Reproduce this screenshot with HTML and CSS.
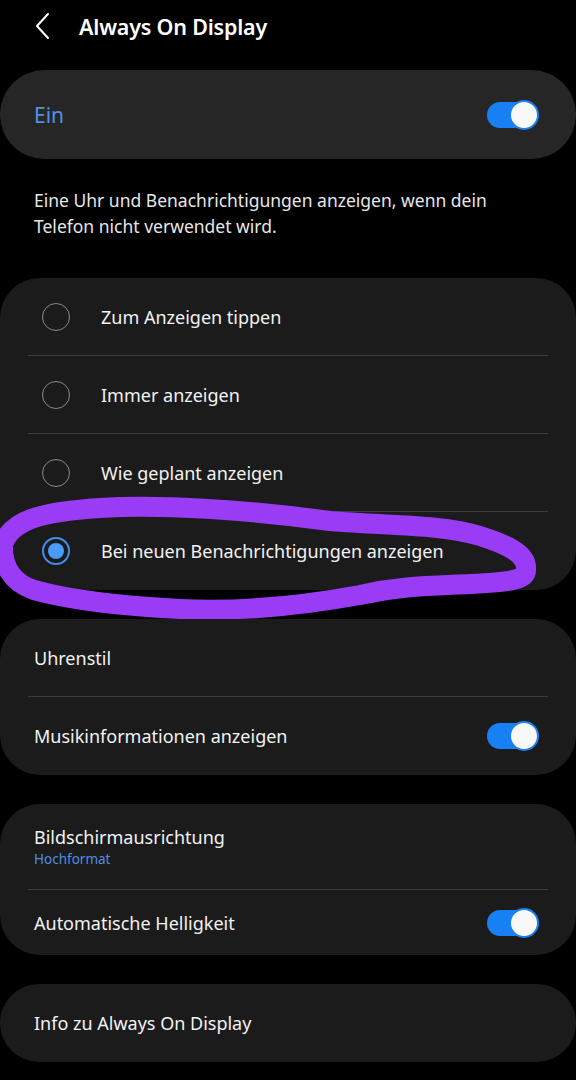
FILE: index.html
```html
<!DOCTYPE html>
<html lang="de">
<head>
<meta charset="utf-8">
<title>Always On Display</title>
<link rel="stylesheet" href="styles.css">
</head>
<body>
<div class="screen">
  <header class="topbar">
    <svg class="back" width="16" height="28" viewBox="0 0 16 28"><path d="M13 2 L2 14 L13 26" fill="none" stroke="#fff" stroke-width="2" stroke-linecap="round" stroke-linejoin="round"/></svg>
    <h1 class="title">Always On Display</h1>
  </header>

  <div class="card card-main">
    <span class="main-label">Ein</span>
    <span class="toggle"><span class="thumb"></span></span>
  </div>

  <p class="desc">Eine Uhr und Benachrichtigungen anzeigen, wenn dein Telefon nicht verwendet wird.</p>

  <div class="card options">
    <div class="row radio-row"><span class="radio"></span><span class="label">Zum Anzeigen tippen</span></div>
    <div class="row radio-row"><span class="radio"></span><span class="label">Immer anzeigen</span></div>
    <div class="row radio-row"><span class="radio"></span><span class="label">Wie geplant anzeigen</span></div>
    <div class="row radio-row last"><span class="radio on"></span><span class="label">Bei neuen Benachrichtigungen anzeigen</span></div>
    <svg class="scribble" width="576" height="360" viewBox="0 0 576 360">
      <path d="M3 266 C 12 242, 40 234, 100 230 C 160 226, 250 232, 330 243 C 390 248, 440 246, 480 258 C 505 266, 528 275, 526 292 C 526 302, 510 304, 470 306 C 430 308, 400 308, 360 317 C 300 328, 240 334, 180 331 C 120 328, 70 322, 34 312 C 10 304, 2 285, 3 266 Z" fill="none" stroke="#9a3cf5" stroke-width="20" stroke-linejoin="round"/>
    </svg>
  </div>

  <div class="card">
    <div class="row"><span class="label">Uhrenstil</span></div>
    <div class="row last"><span class="label">Musikinformationen anzeigen</span><span class="toggle"><span class="thumb"></span></span></div>
  </div>

  <div class="card">
    <div class="row tall">
      <div class="stack">
        <span class="label">Bildschirmausrichtung</span>
        <span class="sub">Hochformat</span>
      </div>
    </div>
    <div class="row short last"><span class="label">Automatische Helligkeit</span><span class="toggle"><span class="thumb"></span></span></div>
  </div>

  <div class="card">
    <div class="row last"><span class="label">Info zu Always On Display</span></div>
  </div>
</div>
</body>
</html>
```

FILE: styles.css
```css
* { box-sizing: border-box; }
html, body {
  margin: 0;
  padding: 0;
  background: #000;
}
body {
  font-family: "Noto Sans", "Open Sans", sans-serif;
  color: #f2f2f2;
  width: 576px;
  height: 1080px;
  overflow: hidden;
}
.screen {
  display: flex;
  flex-direction: column;
}
.topbar {
  height: 70px;
  display: flex;
  align-items: center;
  padding: 0 0 18px 35px;
}
.back { display: block; margin-right: 28px; }
.title {
  margin: 0;
  font-size: 21.5px;
  font-weight: 600;
  letter-spacing: -0.2px;
  color: #fff;
}
.card {
  background: #1b1b1b;
  border-radius: 40px;
  padding: 0 28px;
  position: relative;
  margin-bottom: 29px;
}
.card-main {
  background: #262626;
  height: 89px;
  border-radius: 45px;
  display: flex;
  align-items: center;
  justify-content: space-between;
  padding: 0 38px 0 34px;
  margin-bottom: 0;
}
.main-label {
  color: #4f92e6;
  font-size: 21px;
}
.desc {
  margin: 28px 0 39px;
  padding: 0 70px 0 34px;
  font-size: 17.5px;
  line-height: 26px;
  color: #e6e6e6;
}
.row {
  height: 78px;
  display: flex;
  align-items: center;
  justify-content: space-between;
  border-bottom: 1px solid #3c3c3c;
  padding: 0 10px 0 6px;
}
.row.last { border-bottom: none; }
.row.tall { height: 86px; }
.row.short { height: 65px; }
.label {
  font-size: 18px;
  color: #f2f2f2;
}
.stack { display: flex; flex-direction: column; }
.sub {
  font-size: 13.5px;
  color: #4f8ee2;
  margin-top: 1px;
}
.radio-row { justify-content: flex-start; padding-left: 14px; }
.radio {
  width: 28px;
  height: 28px;
  border-radius: 50%;
  border: 1.5px solid #8a8a8a;
  margin-right: 31px;
  flex: none;
  position: relative;
}
.radio.on {
  border: 2px solid #3f8fe8;
}
.radio.on::after {
  content: "";
  position: absolute;
  left: 4px; top: 4px;
  width: 16px; height: 16px;
  border-radius: 50%;
  background: #4a9bf7;
}
.scribble {
  position: absolute;
  left: 0;
  top: 0;
  pointer-events: none;
  overflow: visible;
}
.toggle {
  width: 51px;
  height: 26px;
  border-radius: 13px;
  background: #1880f5;
  position: relative;
  flex: none;
}
.thumb {
  position: absolute;
  right: -1px;
  top: -2px;
  width: 30px;
  height: 30px;
  border-radius: 50%;
  background: #f8f8f8;
  border: 2px solid #1880f5;
}
```
